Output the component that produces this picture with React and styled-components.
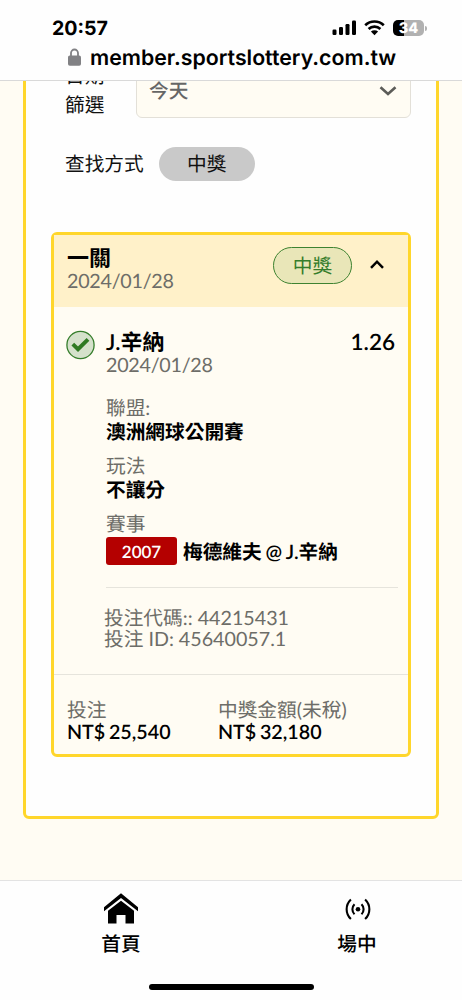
import React from "react";
import styled, { createGlobalStyle } from "styled-components";

const App = () => {
  return (
    <>
      <GlobalStyle />
      <Screen>
        <BrowserBar>
          <StatusRow>
            <Clock>20:57</Clock>
            <StatusIcons>
              <SignalIcon />
              <WifiIcon />
              <Battery>
                <BatteryLevel>34</BatteryLevel>
                <BatteryCap />
              </Battery>
            </StatusIcons>
          </StatusRow>
          <AddressRow>
            <LockIcon />
            <Address>member.sportslottery.com.tw</Address>
          </AddressRow>
        </BrowserBar>

        <Main>
          <Panel>
            <DateFilter>
              <DateLabel>
                日期
                <br />
                篩選
              </DateLabel>
              <Select>
                <span>今天</span>
                <svg width="18" height="10" viewBox="0 0 18 10">
                  <path d="M1.500 1.200 9 8l7.500-6.800" fill="none" stroke="#5c5c58" strokeWidth="2.600" />
                </svg>
              </Select>
            </DateFilter>
            <MethodFilter>
              <span>查找方式</span>
              <MethodPill>中獎</MethodPill>
            </MethodFilter>

            <Ticket>
              <TicketHeader>
                <div>
                  <Title>一關</Title>
                  <DateText>2024/01/28</DateText>
                </div>
                <Result>
                  <ResultPill>中獎</ResultPill>
                  <svg width="14" height="10" viewBox="0 0 14 10">
                    <path d="M1 8.800 7 2.700l6 6.100" fill="none" stroke="#000" strokeWidth="2.500" />
                  </svg>
                </Result>
              </TicketHeader>

              <Selection>
                <CheckIcon />
                <Details>
                  <TitleRow>
                    <Title>J.辛納</Title>
                    <Odds>1.26</Odds>
                  </TitleRow>
                  <DateText>2024/01/28</DateText>
                  <Field $top={20}>
                    <Muted $h={24}>聯盟:</Muted>
                    <Strong>澳洲網球公開賽</Strong>
                  </Field>
                  <Field $top={10}>
                    <Muted $h={24}>玩法</Muted>
                    <Strong>不讓分</Strong>
                  </Field>
                  <Field $top={10}>
                    <Muted $h={24}>賽事</Muted>
                    <Match>
                      <MatchCode>2007</MatchCode>
                      <Strong>梅德維夫 @ J.辛納</Strong>
                    </Match>
                  </Field>
                  <Codes>
                    <Muted $h={21}>投注代碼:: 44215431</Muted>
                    <Muted $h={21}>投注 ID: 45640057.1</Muted>
                  </Codes>
                </Details>
              </Selection>

              <TicketFooter>
                <div>
                  <Muted $h={20}>投注</Muted>
                  <Strong>NT$ 25,540</Strong>
                </div>
                <div>
                  <Muted $h={20}>中獎金額(未稅)</Muted>
                  <Strong>NT$ 32,180</Strong>
                </div>
              </TicketFooter>
            </Ticket>
          </Panel>
        </Main>

        <TabBar>
          <Tabs>
            <Tab>
              <HomeIcon />
              <span>首頁</span>
            </Tab>
            <Tab>
              <LiveIcon />
              <span>場中</span>
            </Tab>
          </Tabs>
          <HomeIndicator />
        </TabBar>
      </Screen>
    </>
  );
};

export default App;

const SignalIcon = () => (
  <svg width="24" height="16" viewBox="0 0 24 16">
    <rect x="0.500" y="9.500" width="4" height="5.500" rx="1.200" />
    <rect x="7" y="7" width="4" height="8" rx="1.200" />
    <rect x="13.500" y="4" width="4" height="11" rx="1.200" />
    <rect x="20" y="0.500" width="4" height="14.500" rx="1.200" />
  </svg>
);

const WifiIcon = () => (
  <svg width="21" height="16" viewBox="0 0 21 16">
    <path
      d="M1.200 5.300a13.300 13.300 0 0 1 18.600 0M4.600 9a8.400 8.400 0 0 1 11.800 0"
      fill="none"
      stroke="#000"
      strokeWidth="2.600"
    />
    <path d="M10.500 15.200 6.900 11.600a5.300 5.300 0 0 1 7.200 0z" />
  </svg>
);

const LockIcon = () => (
  <svg width="13" height="18" viewBox="0 0 13 18">
    <path d="M3 9V5a3.500 3.500 0 0 1 7 0v4" fill="none" stroke="#818184" strokeWidth="1.800" />
    <rect x="0" y="7.500" width="13" height="10.300" rx="1.800" fill="#818184" />
  </svg>
);

const CheckIcon = () => (
  <svg width="30" height="30" viewBox="0 0 30 30">
    <circle cx="14.500" cy="15" r="13.600" fill="#d5e1cb" stroke="#357d2b" strokeWidth="1.300" />
    <path d="m6.800 14.200 5.200 5 10-9.900" fill="none" stroke="#2f7a22" strokeWidth="3.900" />
  </svg>
);

const HomeIcon = () => (
  <svg width="36" height="32" viewBox="0 0 36 32">
    <path d="M1 14.300 18 0.300l17 14v4L18 4.900 1 18.300z" />
    <path d="M18 7.800 31 17.800V30.500h-8.500V22h-9v8.500H5V17.800z" />
  </svg>
);

const LiveIcon = () => (
  <svg width="28" height="32" viewBox="0 0 28 32">
    <circle cx="15" cy="16.200" r="2.300" />
    <g fill="none" stroke="#000" strokeWidth="2.100">
      <path d="M11.500 11.200a7 7 0 0 0 0 10M18.500 11.200a7 7 0 0 1 0 10" />
      <path d="M7.900 6.400a13.400 13.400 0 0 0 0 19.600M22.100 6.400a13.400 13.400 0 0 1 0 19.600" />
    </g>
  </svg>
);

const GlobalStyle = createGlobalStyle`
  * {
    box-sizing: border-box;
  }
  body {
    margin: 0;
    font-family: Lato, "Noto Sans CJK TC", sans-serif;
    font-size: 19.700px;
    text-rendering: geometricPrecision;
    color: #111;
  }
  svg {
    display: block;
    flex-shrink: 0;
  }
`;

const Screen = styled.div`
  width: 462px;
  height: 1000px;
  display: flex;
  flex-direction: column;
  overflow: hidden;
  background: #fffcf3;
`;

const BrowserBar = styled.header`
  flex: 0 0 81px;
  background: #fefefe;
  border-bottom: 1px solid #d9d9d9;
  padding-top: 15px;
  font-family: Inter, sans-serif;
  color: #000;
`;

const StatusRow = styled.div`
  height: 26px;
  display: flex;
  justify-content: space-between;
  align-items: center;
  padding: 0 35px 0 52px;
`;

const Clock = styled.span`
  font-size: 19.600px;
  font-weight: 700;
`;

const StatusIcons = styled.div`
  display: flex;
  align-items: center;
  gap: 8px;
`;

const Battery = styled.div`
  display: flex;
  align-items: center;
  gap: 1px;
`;

const BatteryLevel = styled.span`
  width: 31px;
  height: 16px;
  border-radius: 5px;
  background: linear-gradient(90deg, #000 35%, #b1b1b1 35%);
  color: #fff;
  font-size: 14.500px;
  font-weight: 800;
  line-height: 17px;
  text-align: center;
`;

const BatteryCap = styled.span`
  width: 2px;
  height: 5px;
  border-radius: 0 2px 2px 0;
  background: #b1b1b1;
`;

const AddressRow = styled.div`
  height: 32px;
  display: flex;
  align-items: center;
  padding-left: 68px;
  gap: 9px;
`;

const Address = styled.span`
  padding-top: 2px;
  font-size: 21.300px;
  font-weight: 600;
  white-space: nowrap;
`;

const Main = styled.main`
  flex: 1;
  overflow: hidden;
  padding: 0 23px;
`;

const Panel = styled.section`
  height: 778px;
  margin-top: -40px;
  padding: 23px 25px 0;
  background: #fefefe;
  border: 3px solid #ffd62b;
  border-radius: 6px;
`;

const DateFilter = styled.div`
  height: 51px;
  display: flex;
  align-items: center;
  padding-left: 14px;
`;

const DateLabel = styled.div`
  width: 71px;
  padding-bottom: 3px;
  line-height: 29px;
`;

const Select = styled.div`
  flex: 1;
  height: 100%;
  display: flex;
  align-items: center;
  justify-content: space-between;
  padding: 0 13px 4px 12px;
  border: 1.500px solid #e3e0d8;
  border-radius: 6px;
  background: #fffcf3;
  color: #666;
  font-weight: 500;
  span {
    padding-bottom: 2px;
  }
`;

const MethodFilter = styled.div`
  height: 34px;
  margin-top: 29px;
  display: flex;
  align-items: center;
  padding-left: 14px;
  gap: 15px;
  > span:first-child {
    padding-bottom: 3px;
  }
`;

const MethodPill = styled.span`
  width: 96px;
  height: 34px;
  border-radius: 17px;
  background: #c9c9c9;
  line-height: 35px;
  text-align: center;
`;

const Ticket = styled.article`
  height: 525px;
  margin-top: 51px;
  display: flex;
  flex-direction: column;
  border: 3px solid #ffd62b;
  border-radius: 6px;
  background: #fffcf3;
`;

const TicketHeader = styled.div`
  height: 72px;
  display: flex;
  justify-content: space-between;
  align-items: flex-start;
  padding: 11px 24px 0 13px;
  background: #fff1c9;
`;

const Result = styled.div`
  display: flex;
  align-items: center;
  gap: 18px;
  margin-top: 1px;
  svg {
    margin-bottom: 3px;
  }
`;

const ResultPill = styled.span`
  width: 79px;
  height: 37px;
  border: 1.500px solid #3d8230;
  border-radius: 19px;
  background: #e9e6b8;
  color: #357d2b;
  line-height: 37px;
  text-align: center;
`;

const Title = styled.div`
  height: 24px;
  line-height: 24px;
  font-size: 22px;
  font-weight: 600;
  color: #000;
`;

const Odds = styled(Title)`
  font-size: 22.500px;
`;

const Muted = styled.div`
  height: ${(props) => props.$h || 23}px;
  line-height: ${(props) => props.$h || 23}px;
  color: #6d6d68;
  white-space: nowrap;
`;

const DateText = styled(Muted)`
  letter-spacing: -0.250px;
`;

const Strong = styled.div`
  height: 24px;
  line-height: 24px;
  font-weight: 600;
  color: #000;
  white-space: nowrap;
  word-spacing: -1.200px;
`;

const Selection = styled.div`
  flex: 1;
  display: flex;
  gap: 10px;
  padding: 23px 10px 0 12px;
`;

const Details = styled.div`
  flex: 1;
`;

const TitleRow = styled.div`
  display: flex;
  justify-content: space-between;
  padding-right: 3px;
`;

const Field = styled.div`
  margin-top: ${(props) => props.$top}px;
`;

const Match = styled.div`
  height: 29px;
  margin-top: -1px;
  display: flex;
  align-items: center;
  gap: 6px;
  ${Strong} {
    margin-top: 4px;
  }
`;

const MatchCode = styled.span`
  width: 71px;
  height: 28px;
  border-radius: 3px;
  background: #b40000;
  color: #fff;
  font-size: 17px;
  font-weight: 600;
  line-height: 29px;
  text-align: center;
`;

const Codes = styled.div`
  margin-top: 22px;
  padding-top: 20px;
  border-top: 1.500px solid #e6e4dc;
  text-indent: -2px;
`;

const TicketFooter = styled.div`
  height: 80px;
  display: grid;
  grid-template-columns: 151px 1fr;
  padding: 26px 13px 0;
  border-top: 1px solid #e6e4dc;
`;

const TabBar = styled.nav`
  flex: 0 0 120px;
  display: flex;
  flex-direction: column;
  align-items: center;
  background: #fefefe;
  border-top: 1px solid #e3e3e3;
`;

const Tabs = styled.div`
  width: 100%;
  height: 103px;
  display: grid;
  grid-template-columns: 242px 230px;
`;

const Tab = styled.div`
  display: flex;
  flex-direction: column;
  align-items: center;
  padding-top: 12px;
  font-weight: 500;
  color: #000;
  span {
    line-height: 40px;
  }
`;

const HomeIndicator = styled.div`
  width: 165px;
  height: 6px;
  border-radius: 3px;
  background: #000;
`;
